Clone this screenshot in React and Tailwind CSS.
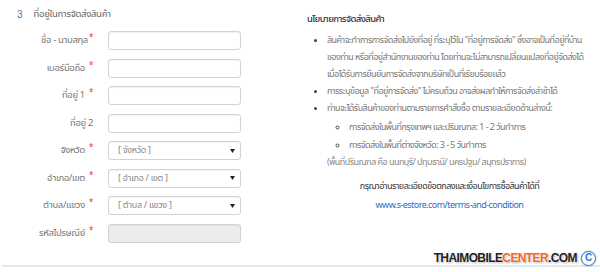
import React from "react";

function Label({ text, req, tight }) {
  return (
    <div className="w-[93px] h-[19px] flex justify-end items-start text-[9.5px] tracking-[-0.35px] text-[#777] whitespace-nowrap">
      <span className="leading-[19px]">{text}</span>
      {req && (
        <span className={`text-[#e33] text-[8px] leading-[14px] ${tight ? "ml-[1px]" : "ml-[4px]"}`}>*</span>
      )}
    </div>
  );
}

function Input({ disabled }) {
  return (
    <div
      className={`w-[133px] h-[19px] rounded-[3px] border border-[#d2d2d2] shadow-[inset_0_1px_1px_rgba(0,0,0,0.06)] ${
        disabled ? "bg-[#ececec]" : "bg-white"
      }`}
    />
  );
}

function Select({ text }) {
  return (
    <div className="w-[133px] h-[19px] rounded-[3px] border border-[#d2d2d2] bg-white flex items-center justify-between pl-[9px] pr-[5px] shadow-[inset_0_1px_1px_rgba(0,0,0,0.04)]">
      <span className="text-[9px] tracking-[-0.3px] text-[#888] leading-none whitespace-nowrap">{text}</span>
      <svg width="5" height="4" viewBox="0 0 5 4">
        <path d="M0 0H5L2.5 4Z" fill="#222" />
      </svg>
    </div>
  );
}

const rows = [
  { label: "ชื่อ - นามสกุล", req: true, type: "input", tight: true },
  { label: "เบอร์มือถือ", req: true, type: "input" },
  { label: "ที่อยู่ 1", req: true, type: "input" },
  { label: "ที่อยู่ 2", req: false, type: "input" },
  { label: "จังหวัด", req: true, type: "select", text: "[ จังหวัด ]" },
  { label: "อำเภอ/เขต", req: true, type: "select", text: "[ อำเภอ / เขต ]" },
  { label: "ตำบล/แขวง", req: true, type: "select", text: "[ ตำบล / แขวง ]" },
  { label: "รหัสไปรษณีย์", req: true, type: "disabled" },
];

export default function App() {
  return (
    <div className="w-[600px] h-[272px] bg-white relative overflow-hidden font-['Noto_Sans_Thai','Noto_Sans',sans-serif]">
      <div className="flex h-[262px] overflow-hidden">
        {/* left form */}
        <div className="w-[300px] pt-[7px] overflow-hidden">
          <div className="flex items-center h-[16px]">
            <span className="ml-[17px] text-[#3b7bbf] font-['Liberation_Sans',sans-serif] text-[10px] leading-none">3</span>
            <span className="ml-[11px] text-[#666] text-[9.5px] tracking-[-0.3px] leading-none">ที่อยู่ในการจัดส่งสินค้า</span>
          </div>
          <div className="mt-[8px] flex flex-col gap-[8.5px]">
            {rows.map((r, i) => (
              <div key={i} className="flex items-center gap-[15px] h-[19px]">
                <Label text={r.label} req={r.req} tight={r.tight} />
                {r.type === "input" && <Input />}
                {r.type === "select" && <Select text={r.text} />}
                {r.type === "disabled" && <Input disabled />}
              </div>
            ))}
          </div>
        </div>

        {/* right policy */}
        <div className="w-[292px] pt-[10px] pl-[7px] text-[9px] tracking-[-0.55px] leading-[17px] text-[#777] whitespace-nowrap">
          <div className="text-[9.5px] tracking-[-0.6px] text-[#333] font-medium leading-[18px]">นโยบายการจัดส่งสินค้า</div>
          <ul className="mt-[4px] pl-[20px] list-disc marker:text-[#444]">
            <li>
              สินค้าจะทำการการจัดส่งไปยังที่อยู่ ที่ระบุไว้ใน "ที่อยู่การจัดส่ง" ซึ่งอาจเป็นที่อยู่ที่บ้าน
              <br />
              ของท่าน หรือที่อยู่สำนักงานของท่าน โดยท่านจะไม่สามารถเปลี่ยนแปลงที่อยู่จัดส่งได้
              <br />
              เมื่อได้รับการยืนยันการจัดส่งจากบริษัทเป็นที่เรียบร้อยแล้ว
            </li>
            <li>การระบุข้อมูล "ที่อยู่การจัดส่ง" ไม่ครบถ้วน อาจส่งผลทำให้การจัดส่งล่าช้าได้</li>
            <li>
              ท่านจะได้รับสินค้าของท่านตามรายการคำสั่งซื้อ ตามรายละเอียดด้านล่างนี้:
              <ul className="pl-[22px] list-[circle] mt-[1px]">
                <li className="leading-[18px]">การจัดส่งในพื้นที่กรุงเทพฯ และปริมณฑล: 1 - 2 วันทำการ</li>
                <li className="leading-[18px]">การจัดส่งในพื้นที่ต่างจังหวัด: 3 - 5 วันทำการ</li>
              </ul>
              <div className="text-[#888]">(พื้นที่ปริมณฑล คือ นนทบุรี/ ปทุมธานี/ นครปฐม/ สมุทรปราการ)</div>
            </li>
          </ul>
          <div className="mt-[7px] text-center text-[#333]">กรุณาอ่านรายละเอียดข้อตกลงและเงื่อนไขการซื้อสินค้าได้ที่</div>
          <div className="mt-[2px] text-center text-[#2a6fc4]">www.s-estore.com/terms-and-condition</div>
        </div>
      </div>

      {/* bottom divider */}
      <div className="mt-[3px] ml-[2px] h-[2px] bg-[#e8e8e8]" />

      {/* watermark */}
      <div className="absolute right-[4px] top-[249px] flex items-center gap-[4px] whitespace-nowrap font-['Liberation_Sans',Arial,sans-serif]">
        <span className="text-[12px] font-bold tracking-[-0.6px] text-[#222] [text-shadow:0_0_2px_#fff,0_0_2px_#fff,1px_1px_2px_rgba(0,0,0,0.4)]">
          THAIMOBILE<span className="text-[#f26a1b]">CENTER</span>.COM
        </span>
        <span className="shrink-0 w-[15px] h-[15px] rounded-full border-[1.5px] border-[#2a78d6] bg-white text-[#2a78d6] text-[10px] font-bold flex items-center justify-center leading-none shadow-[0_0_2px_rgba(0,0,0,0.35)]">
          C
        </span>
      </div>
    </div>
  );
}
